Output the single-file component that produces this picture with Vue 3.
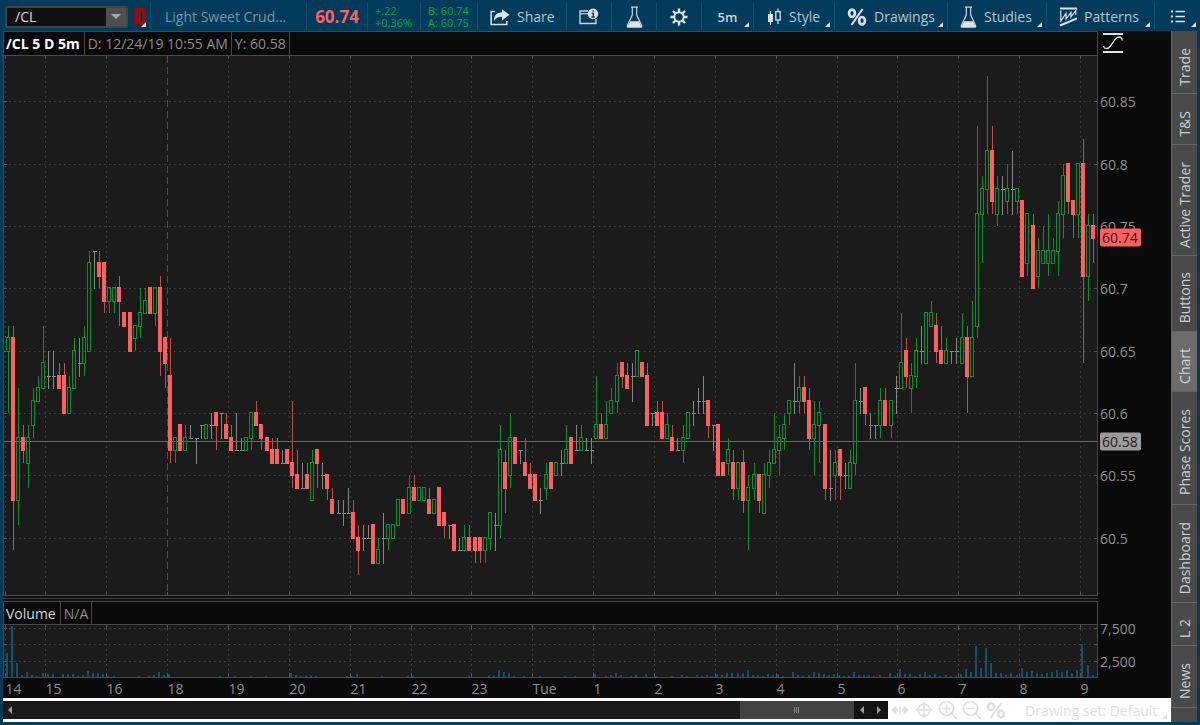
<script setup>
import { ref } from 'vue'

const symbol = ref('/CL')
const activeTab = ref('Chart')

const tabs = [
  { name: 'Trade', size: 63 },
  { name: 'T&S', size: 51 },
  { name: 'Active Trader', size: 111 },
  { name: 'Buttons', size: 76 },
  { name: 'Chart', size: 60 },
  { name: 'Phase Scores', size: 113 },
  { name: 'Dashboard', size: 98 },
  { name: 'L 2', size: 43 },
  { name: 'News', size: 62 },
]

// Each bar: direction (G up, R down, D flat), high, low, body top, body bottom; cents above 60.
const series = `
G67,60,66,65 R67,49,66,53 G62,51,58,53 R59,56,58,57 G59,54,58,56 G62,58,61,59 G63,61,62,61 G67,62,64,62 D65,62,63,63 D65,62,63,63
R64,62,63,62 R64,60,63,60 G63,60,62,60 G66,62,65,62 D66,63,64,64 G67,63,66,64 G73,65,72,65 D73,70,73,73 R73,70,72,71 R72,68,72,69
G70,68,70,69 G70,68,70,69 R71,67,70,69 R68,67,68,67 R68,65,68,65 G67,65,67,66 G70,66,68,67 G70,68,69,68 R70,68,70,68 G70,67,70,68
R71,63,70,65 R66,62,66,64 R66,56,63,57 G58,56,58,57 R59,57,59,57 G59,57,58,57 D59,58,58,58 D58,56,58,58 D59,58,59,59 G59,58,59,58
D60,58,59,59 R60,57,60,59 D60,58,60,60 R60,58,59,58 R59,57,58,57 D60,57,57,57 D58,57,57,57 G58,57,58,57 G60,57,60,58 R61,59,60,59
R59,57,59,58 R58,57,58,57 R58,56,57,56 R58,56,57,56 D57,56,56,56 R57,56,57,56 R61,54,56,55 R57,54,55,54 D56,54,54,54 R56,54,55,54
G57,53,56,53 R57,54,57,56 D56,54,55,55 R55,53,55,54 R54,52,53,52 D53,52,52,52 D53,51,52,52 D54,52,52,52 R53,50,52,50 R51,47,50,49
D51,49,50,50 D51,50,50,50 R51,48,51,48 G50,48,49,48 D52,48,50,50 G51,49,51,50 G51,50,51,50 G53,51,53,51 R53,52,53,52 G55,52,54,52
R55,53,54,53 G54,53,54,53 G54,53,54,53 R54,52,53,52 G53,52,53,52 R54,51,54,51 R52,50,52,51 D51,50,51,51 R51,49,51,49 D50,49,49,49
G51,49,50,49 R51,49,50,49 R50,48,50,49 R50,48,50,49 G50,48,50,49 G52,49,52,50 D52,49,51,51 G59,50,57,51 R57,52,56,54 G60,54,58,55
R58,56,58,56 D57,56,57,57 R58,55,56,55 R56,54,55,54 R55,53,55,53 D54,52,53,53 G56,53,55,54 R56,54,56,54 G56,55,56,55 D57,55,56,56
G59,56,57,56 R58,56,58,56 D59,57,57,57 G59,57,58,57 D58,57,57,57 D58,56,57,57 G63,58,59,58 R60,58,59,58 G61,58,59,58 G62,60,61,60
G64,60,63,61 R64,62,64,63 R64,62,63,62 D64,61,63,63 G65,63,65,63 R64,63,64,63 R64,59,63,59 D60,59,60,60 R61,59,60,59 R61,58,60,58
G60,58,59,58 R59,57,58,57 D58,57,57,57 G59,56,58,57 G60,58,60,58 D61,59,60,60 D62,60,61,61 D63,60,61,61 R61,58,61,59 D59,57,59,59
R59,55,59,55 R56,55,56,55 G58,55,57,56 R57,53,56,54 G56,53,56,54 R57,52,56,53 G55,49,54,53 G56,53,55,54 R55,52,55,53 G56,52,55,52
G57,54,56,55 G60,56,57,56 G59,55,58,57 G60,57,59,58 G61,59,61,60 D64,60,61,61 G63,60,62,61 R63,60,62,61 R62,57,61,58 G61,55,59,58
G61,56,60,59 R59,53,59,54 D57,53,54,54 G57,53,56,55 R57,53,57,55 D56,54,55,55 G57,54,56,54 G64,55,61,56 D62,60,61,61 R62,59,62,60
D60,58,59,59 D59,58,59,59 G62,58,61,59 R62,59,61,59 G61,58,61,59 D63,60,62,62 G68,62,64,62 R66,62,65,63 G64,60,63,62 G66,62,65,63
D67,64,65,65 G68,64,68,64 G69,67,68,67 R68,64,67,65 R67,64,65,64 G66,64,65,64 D65,64,65,65 D66,64,65,65 G68,64,66,64 R67,60,66,63
G69,63,66,63 G83,66,76,67 G79,72,78,76 G87,76,81,78 R83,76,81,77 G79,75,78,76 D79,76,78,78 G80,76,78,77 D81,76,78,78 G78,76,78,77
R77,71,77,71 G76,71,76,72 R76,70,75,70 G74,70,73,71 G75,72,73,72 G76,71,73,72 G74,72,73,72 G77,71,76,73 G80,74,79,76 R80,76,80,77
R77,74,77,76 G80,74,80,76 R82,64,80,71 G76,69,75,71 R76,72,75,74`

const plot = { left: 3, top: 55, width: 1095, height: 541 }
const step = 5.073
const priceY = (c) => 413 - (c - 60) * 12.467

const candles = series.trim().split(/\s+/).map((s, i) => {
  const [high, low, top, bottom] = s.slice(1).split(',').map((c) => Math.round(priceY(Number(c))))
  return { kind: s[0], x: Math.round(7.8 + i * step), high, low, top, bottom }
})

// index:height pairs of the volume columns
const volumes = `0:24 1:51 2:14 3:2 4:5 5:2 6:1 7:4 8:3 9:3 11:3 12:3 13:3 14:1 15:2 16:6 17:4 18:4 19:3 20:1 21:1 26:1 28:1 29:2 30:5 31:2 32:3
42:1 45:1 48:1 51:1 56:4 57:2 58:1 59:1 60:1 61:1 67:1 68:1 69:3 74:1 79:1 80:1 91:1 95:1 96:1 97:7 98:5 99:4 100:1 102:1 105:1 110:1 112:1
116:3 118:1 119:2 120:4 121:2 123:1 124:2 126:3 128:1 131:1 133:2 134:1 136:2 137:1 138:2 139:1 140:3 141:2 142:4 143:4 144:4 145:4 146:7
147:2 148:2 149:1 150:3 151:2 152:3 153:1 155:5 156:2 157:1 158:2 159:5 160:4 161:3 162:2 163:3 164:2 165:1 166:1 167:5 168:2 169:2 170:2
171:1 172:2 174:4 175:1 176:8 177:3 178:3 179:1 180:3 181:5 182:2 183:3 184:1 185:2 186:1 187:1 188:3 189:8 190:5 191:31 192:9 193:29 194:14
195:4 196:4 197:2 198:4 199:2 200:9 201:5 202:6 203:4 204:3 205:4 206:5 207:7 208:5 209:7 210:4 211:7 212:33 213:12 214:2`
  .split(/\s+/)
  .map((s) => s.split(':').map(Number))
  .map(([i, h]) => ({ x: Math.round(6 + i * step), h }))

const hourX = [5.5, 45.5, 106.5, 167.5, 228.5, 289.5, 350.5, 411.5, 471.5, 532.5, 593.5, 654.5, 715.5, 776.5, 837.5, 897.5, 958.5, 1019.5, 1080.5]
const hourNames = ['14', '15', '16', '18', '19', '20', '21', '22', '23', 'Tue', '1', '2', '3', '4', '5', '6', '7', '8', '9']
const hours = hourNames.map((name, i) => ({
  name,
  left: ((hourX[i] - plot.left) / plot.width) * 100 + '%',
}))

const priceLevels = [85, 80, 75, 70, 65, 60, 55, 50]
const priceTop = (y) => ((y - plot.top) / plot.height) * 100 + '%'
const priceLabels = priceLevels.map((c) => ({
  text: String((6000 + c) / 100),
  top: priceTop(priceY(c)),
}))
const crosshairY = 441.5
const lineY = (c) => Math.round(priceY(c)) + 0.5
</script>

<template>
  <div class="app">
    <header class="toolbar">
      <div class="cell symbol-cell">
        <div class="symbol-box">
          <input v-model="symbol" class="symbol-input" aria-label="Symbol" />
          <button class="drop" aria-label="Symbol list">
            <svg width="10" height="6"><path d="M0 0H10L5 5Z" fill="#a9a9a9" /></svg>
          </button>
        </div>
        <button class="link-badge" aria-label="Symbol link 1">1</button>
        <i class="corner"></i>
      </div>
      <div class="cell instrument">Light Sweet Crud...</div>
      <div class="cell last">60.74</div>
      <div class="cell quote"><span>+.22</span><span>+0.36%</span></div>
      <div class="cell quote"><span>B: 60.74</span><span>A: 60.75</span></div>
      <button class="cell tool">
        <svg width="20" height="18" viewBox="0 0 20 18">
          <path d="M5 3.5H1.2V16.5H16.8V13" fill="none" stroke="#d9dcde" stroke-width="1.6" />
          <path d="M4 13C4 7 7 4.6 12 4.6V1.2L19.4 6.8L12 12.4V8.8C8 8.8 6 10 4 13Z" fill="#dfe2e4" />
        </svg>
        Share
      </button>
      <button class="cell icon-only" aria-label="Company info">
        <svg width="20" height="18" viewBox="0 0 20 18">
          <path d="M9 3H1V15.5H17V11" fill="none" stroke="#cdd4d8" stroke-width="1.4" />
          <path d="M1 5.8H9" stroke="#cdd4d8" stroke-width="1.2" />
          <circle cx="14" cy="5.8" r="5.2" fill="#dfe2e4" />
          <path d="M14.2 2.3V3.8M12.5 5.1H14.3V8.9M12.3 9H16" fill="none" stroke="#12405e" stroke-width="1.4" />
        </svg>
      </button>
      <button class="cell icon-only" aria-label="Analyze">
        <svg width="17" height="22" viewBox="0 0 17 22">
          <path d="M5 1.2H12M6.3 1.5V9L1.4 19.5Q1 21 2.4 21H14.6Q16 21 15.6 19.5L10.7 9V1.5" fill="none" stroke="#cdd4d8" stroke-width="1.2" />
          <path d="M4.2 15.2H12.8L16 21.5H1Z" fill="#e0e2e4" />
        </svg>
      </button>
      <button class="cell icon-only" aria-label="Chart settings">
        <svg width="18" height="18" viewBox="-9 -9 18 18">
          <g stroke="#dfe2e4" stroke-width="2.4">
            <path d="M0 -8.5V-5M0 8.5V5M-8.5 0H-5M8.5 0H5" />
            <path d="M-6 -6L-3.6 -3.6M6 6L3.6 3.6M-6 6L-3.6 3.6M6 -6L3.6 -3.6" />
          </g>
          <circle r="4.7" fill="none" stroke="#dfe2e4" stroke-width="1.9" />
        </svg>
      </button>
      <button class="cell interval">5m<i class="corner"></i></button>
      <button class="cell tool">
        <svg width="16" height="18" viewBox="0 0 16 18">
          <path d="M4.5 3V17" stroke="#dfe2e4" stroke-width="1.2" />
          <rect x="2" y="6" width="5" height="8" fill="#dfe2e4" />
          <path d="M12 0.5V3.5M12 12V16" stroke="#dfe2e4" stroke-width="1.2" />
          <rect x="9.8" y="3.6" width="4.4" height="8.4" fill="none" stroke="#dfe2e4" stroke-width="1.3" />
        </svg>
        Style<i class="corner"></i>
      </button>
      <button class="cell tool">
        <svg width="20" height="18" viewBox="0 0 20 18">
          <g fill="none" stroke="#dfe2e4">
            <ellipse cx="5" cy="5.3" rx="2.9" ry="3.7" stroke-width="2.7" />
            <ellipse cx="15" cy="12.7" rx="2.9" ry="3.7" stroke-width="2.7" />
            <path d="M15.5 1L4.5 17" stroke-width="2" />
          </g>
        </svg>
        Drawings<i class="corner"></i>
      </button>
      <button class="cell tool">
        <svg width="17" height="22" viewBox="0 0 17 22">
          <path d="M5 1.2H12M6.3 1.5V9L1.4 19.5Q1 21 2.4 21H14.6Q16 21 15.6 19.5L10.7 9V1.5" fill="none" stroke="#cdd4d8" stroke-width="1.2" />
          <path d="M4.2 15.2H12.8L16 21.5H1Z" fill="#e0e2e4" />
        </svg>
        Studies<i class="corner"></i>
      </button>
      <button class="cell tool">
        <svg width="18" height="20" viewBox="0 0 18 20">
          <g fill="none" stroke="#dfe2e4">
            <path d="M1 1.5H18" stroke-width="2" />
            <path d="M1 18.5L18 11.5" stroke-width="2" />
            <path d="M1.8 3.5V14L7 6.5V12L12 5.5V10L16.8 3.5V8" stroke-width="1.2" />
          </g>
        </svg>
        Patterns<i class="corner"></i>
      </button>
      <button class="cell icon-only" aria-label="Chart menu">
        <svg width="14" height="13" viewBox="0 0 14 13">
          <path d="M4.5 1.5H14M4.5 6.5H14M4.5 11.5H14" stroke="#dfe2e4" stroke-width="1.4" />
          <path d="M0 1.5H2M0 6.5H2M0 11.5H2" stroke="#dfe2e4" stroke-width="1.8" />
        </svg>
        <i class="corner"></i>
      </button>
    </header>

    <div class="workspace">
      <main class="chart">
        <div class="info-row upper">
          <span class="seg title">/CL 5 D 5m</span>
          <span class="seg">D: 12/24/19 10:55 AM</span>
          <span class="seg">Y: 60.58</span>
        </div>
        <button class="scale-button" aria-label="Auto scale">
          <svg width="20" height="22" viewBox="0 0 20 22">
            <path d="M0 2H20M0 20H20" stroke="#dfe2e2" stroke-width="2" />
            <path d="M0.5 14C1 17.5 5 17.5 7.5 14L12 7.5C14.5 4 18.5 4 19.3 8.5" fill="none" stroke="#dfe2e2" stroke-width="1.3" />
          </svg>
        </button>

        <svg class="price-plot" viewBox="3 55 1095 541" preserveAspectRatio="none">
          <rect x="3" y="55" width="1095" height="541" fill="#1b1b1b" />
          <g stroke="#424242" stroke-dasharray="1.5 3.5">
            <path v-for="c in priceLevels" :key="c" :d="`M4 ${lineY(c)}H1097`" />
            <path v-for="x in hourX" :key="x" :d="`M${x} 56V595`" />
          </g>
          <path d="M167.5 56V595" stroke="#1b1b1b" />
          <path d="M167.5 56V595" stroke="#505050" stroke-dasharray="7 4" />
          <g stroke="#555">
            <path v-for="x in hourX" :key="x" :d="`M${x} 55V59M${x} 592V596`" />
            <path v-for="c in priceLevels" :key="c" :d="`M4 ${lineY(c)}H7M1094 ${lineY(c)}H1097`" />
          </g>
          <path d="M3 55.5H1098M3 595.5H1098M3.5 55V596M1097.5 55V596" stroke="#484848" />
          <path :d="`M4 ${crosshairY}H1097`" stroke="#666" />
          <g v-for="(k, i) in candles" :key="i" :class="k.kind">
            <template v-if="k.kind === 'D'">
              <path :d="`M${k.x + 0.5} ${k.high}V${k.low + 1}M${k.x - 1} ${k.top + 0.5}h4`" />
            </template>
            <template v-else>
              <path :d="`M${k.x + 0.5} ${k.high}V${k.top}M${k.x + 0.5} ${k.bottom}V${k.low}`" />
              <rect v-if="k.kind === 'G'" :x="k.x - 1.5" :y="k.top - 0.5" width="3" :height="k.bottom - k.top + 1" />
              <rect v-else :x="k.x - 2" :y="k.top - 1" width="4" :height="k.bottom - k.top + 2" />
            </template>
          </g>
        </svg>
        <svg class="price-axis">
          <text v-for="p in priceLabels" :key="p.text" x="2" dy="6" :y="p.top">{{ p.text }}</text>
          <svg x="2" :y="priceTop(237.5)" class="bubble">
            <rect y="-9" width="41" height="18" rx="2" fill="#ff5f5f" />
            <text x="2" y="5" class="dark">60.74</text>
          </svg>
          <svg x="2" :y="priceTop(crosshairY)" class="bubble">
            <rect y="-9" width="41" height="18" rx="2" fill="#9c9c9c" />
            <text x="2" y="5" class="dark">60.58</text>
          </svg>
        </svg>

        <div class="splitter"></div>
        <div class="filler"></div>

        <div class="info-row">
          <span class="seg study">Volume</span>
          <span class="seg">N/A</span>
        </div>
        <div class="filler"></div>

        <svg class="volume-plot" viewBox="3 625 1095 53" preserveAspectRatio="none">
          <rect x="3" y="624" width="1095" height="54" fill="#1b1b1b" />
          <g stroke="#464646" stroke-dasharray="1.5 3.5">
            <path d="M4 628.5H1097M4 644.5H1097M4 661.5H1097" />
            <path v-for="x in hourX" :key="x" :d="`M${x} 629V676`" />
          </g>
          <g stroke="#555">
            <path v-for="x in hourX" :key="x" :d="`M${x} 625V629M${x} 673V677`" />
            <path d="M4 628.5H7M4 644.5H7M4 661.5H7M1094 628.5H1097M1094 644.5H1097M1094 661.5H1097" />
          </g>
          <rect v-for="v in volumes" :key="v.x" :x="v.x" :y="677 - v.h" width="2" :height="v.h" fill="#12516f" />
          <path d="M3 677.5H1098M3.5 625V678M1097.5 625V678" stroke="#484848" />
        </svg>
        <svg class="volume-axis">
          <text x="2" y="9">7,500</text>
          <text x="2" y="42">2,500</text>
        </svg>

        <svg class="time-axis">
          <text v-for="h in hours" :key="h.name" :x="h.left" y="16">{{ h.name }}</text>
        </svg>

        <footer class="bottom">
          <div class="scrollbar">
            <button class="arrow" aria-label="Scroll left"><svg width="5" height="8"><path d="M4 0V8L0 4Z" fill="#999" /></svg></button>
            <div class="track">
              <div class="thumb"><svg width="6" height="6"><path d="M0.5 0V6M2.5 0V6M4.5 0V6" stroke="#858585" /></svg></div>
            </div>
            <button class="arrow end" aria-label="Step left"><svg width="5" height="8"><path d="M4 0V8L0 4Z" fill="#999" /></svg></button>
            <button class="arrow end" aria-label="Step right"><svg width="5" height="8"><path d="M0 0V8L4 4Z" fill="#999" /></svg></button>
          </div>
          <div class="drawing-tools">
            <button aria-label="Pan">
              <svg width="20" height="20" viewBox="0 0 20 20"><path d="M1 10L6.5 5V8.5H8V11.5H6.5V15ZM19 10L13.5 5V8.5H12V11.5H13.5V15ZM9.2 6H10.8V14H9.2Z" fill="#dedede" /></svg>
            </button>
            <button aria-label="Crosshair">
              <svg width="20" height="20" viewBox="0 0 20 20"><g fill="none" stroke="#dedede" stroke-width="1.5"><circle cx="10" cy="10" r="6" /><path d="M10 2V18M2 10H18" /></g></svg>
            </button>
            <button aria-label="Zoom in">
              <svg width="20" height="20" viewBox="0 0 20 20"><g fill="none" stroke="#dedede" stroke-width="1.7"><circle cx="8.5" cy="8.5" r="7" /><path d="M4.5 8.5H12.5M8.5 4.5V12.5M13.5 13.5L19 19" /></g></svg>
            </button>
            <button aria-label="Zoom out">
              <svg width="20" height="20" viewBox="0 0 20 20"><g fill="none" stroke="#dedede" stroke-width="1.7"><circle cx="8.5" cy="8.5" r="7" /><path d="M4.5 8.5H12.5M13.5 13.5L19 19" /></g></svg>
            </button>
            <button aria-label="Drawing tools">
              <svg width="20" height="18" viewBox="0 0 20 18"><g fill="none" stroke="#dedede"><ellipse cx="5" cy="5.8" rx="2.9" ry="3.5" stroke-width="2.6" /><ellipse cx="15" cy="13" rx="2.9" ry="3.5" stroke-width="2.6" /><path d="M15.5 2L4.5 17" stroke-width="2" /></g></svg>
            </button>
            <button class="drawing-set">Drawing set: Default</button>
            <i class="corner pale"></i>
          </div>
        </footer>
      </main>

      <nav class="side">
        <button
          v-for="t in tabs"
          :key="t.name"
          :class="['tab', { active: t.name === activeTab }]"
          :style="{ flexGrow: t.size }"
          @click="activeTab = t.name"
        >
          <span>{{ t.name }}</span>
        </button>
        <div class="tab-rest"></div>
      </nav>
    </div>
  </div>
</template>

<style>
body {
  background: #023b5b;
}
</style>

<style scoped>
.app {
  display: flex;
  flex-direction: column;
  min-height: 100vh;
  box-sizing: border-box;
  padding-bottom: 3px;
  background: #023b5b;
  font-family: "Open Sans", "Noto Sans", sans-serif;
  font-size: 14px;
  color: #8c8c8c;
}
button {
  border: 0;
  padding: 0;
  margin: 0;
  background: none;
  font: inherit;
  color: inherit;
}
svg {
  display: block;
  flex: none;
}
.toolbar {
  display: grid;
  grid-template-columns: 151fr 156fr 61fr 53fr 57fr 89fr 45fr 45fr 45fr 52fr 81fr 113fr 99fr 108fr 45fr;
  height: 31px;
  box-sizing: border-box;
  padding: 3px 0 1px;
}
.cell {
  position: relative;
  display: flex;
  align-items: center;
  min-width: 0;
  border-right: 1px solid #174d6d;
  white-space: nowrap;
}
.cell:last-child {
  border-right: 0;
}
.corner {
  position: absolute;
  right: 4px;
  bottom: 3px;
  border-left: 5px solid transparent;
  border-bottom: 5px solid #dfe2e4;
}
.symbol-cell {
  padding-left: 5px;
  gap: 6px;
}
.symbol-box {
  display: flex;
  flex: 1;
  min-width: 0;
  height: 22px;
  box-sizing: border-box;
  border: 2px solid #414448;
  border-radius: 2px;
  background: #111;
}
.symbol-input {
  flex: 1;
  min-width: 0;
  border: 0;
  padding: 0 0 0 8px;
  background: none;
  color: #dcdcdc;
  font: inherit;
}
.drop {
  display: flex;
  align-items: center;
  justify-content: center;
  width: 20px;
  background: #505050;
}
.link-badge {
  width: 12px;
  height: 17px;
  margin-right: 4px;
  border-radius: 2px;
  background: #910d12;
  color: #2b3046;
  font-weight: 600;
  line-height: 17px;
}
.instrument {
  padding-left: 14px;
  color: #7b94a3;
}
.last {
  justify-content: center;
  font-size: 17px;
  font-weight: 700;
  color: #ff5f66;
}
.quote {
  flex-direction: column;
  align-items: flex-start;
  justify-content: center;
  padding-left: 7px;
  font-size: 11px;
  line-height: 12px;
  color: #0aa843;
}
.tool {
  gap: 7px;
  padding-left: 12px;
  color: #b9c6cf;
}
.icon-only {
  justify-content: center;
}
.interval {
  justify-content: center;
  font-size: 13px;
  font-weight: 600;
  color: #ccd5da;
}
.workspace {
  display: grid;
  grid-template-columns: minmax(0, 1fr) 26px;
  flex: 1;
  padding: 0 3px;
}
.chart {
  display: grid;
  grid-template-columns: minmax(0, 1fr) 73px;
  grid-template-rows: 24px minmax(0, 1fr) 5px 24px 53px 20px 24px;
  background: #0a0a0a;
}
.info-row {
  display: flex;
  box-sizing: border-box;
  border: 1px solid #484848;
}
.upper {
  border-bottom: 0;
}
.seg {
  padding: 0 3px;
  border-right: 1px solid #484848;
  line-height: 23px;
  white-space: nowrap;
}
.title {
  padding-left: 2px;
  padding-right: 4px;
  font-weight: 700;
  color: #fff;
}
.study {
  padding-left: 2px;
  padding-right: 4px;
  color: #d5d5d5;
}
.scale-button {
  padding-left: 5px;
}
.price-plot,
.price-axis,
.volume-plot,
.volume-axis,
.time-axis {
  width: 100%;
  height: 100%;
}
.volume-axis,
.time-axis {
  overflow: visible;
}
.time-axis {
  grid-column: 1;
}
.price-axis text,
.volume-axis text,
.time-axis text {
  fill: #8f8f8f;
}
.price-axis text.dark {
  fill: #262020;
}
.bubble {
  overflow: visible;
}
.splitter {
  box-sizing: border-box;
  border-bottom: 1px solid #111;
  background: linear-gradient(#111 2px, #3c3c3c 2px, #3c3c3c 3px, #111 3px);
}
.G path,
.G rect {
  fill: none;
  stroke: #05922f;
}
.R path {
  stroke: #c04c4c;
}
.R rect {
  fill: #ff5f5f;
}
.D path {
  fill: none;
  stroke: #858585;
}
.bottom {
  grid-column: 1 / -1;
  display: grid;
  grid-template-columns: minmax(0, 885fr) minmax(0, 283fr);
  align-items: center;
  background: #fff;
}
.scrollbar {
  display: flex;
  height: 18px;
  box-sizing: border-box;
  background: #1a1a1a;
}
.arrow {
  display: flex;
  align-items: center;
  justify-content: center;
  width: 14px;
}
.end {
  width: 17px;
  background: #141414;
}
.track {
  display: flex;
  flex: 1;
  justify-content: flex-end;
}
.thumb {
  display: flex;
  align-items: center;
  justify-content: center;
  width: 13.6%;
  background: #424242;
}
.drawing-tools {
  position: relative;
  display: flex;
  align-items: center;
  height: 24px;
  gap: 4px;
  padding-left: 2px;
  color: #dedede;
  white-space: nowrap;
}
.drawing-set {
  margin-left: 15px;
}
.pale {
  border-bottom-color: #dedede;
}
.side {
  display: flex;
  flex-direction: column;
  background: #4a4a4a;
}
.tab {
  display: flex;
  align-items: center;
  justify-content: center;
  flex-basis: 0;
  min-height: 0;
  box-shadow: inset 1px -1px #666;
  color: #cfcfcf;
}
.tab span {
  padding-bottom: 8px;
  writing-mode: vertical-rl;
  transform: rotate(180deg);
  white-space: nowrap;
}
.active {
  background: #6c6c6c;
}
.tab-rest {
  height: 14px;
}
</style>
